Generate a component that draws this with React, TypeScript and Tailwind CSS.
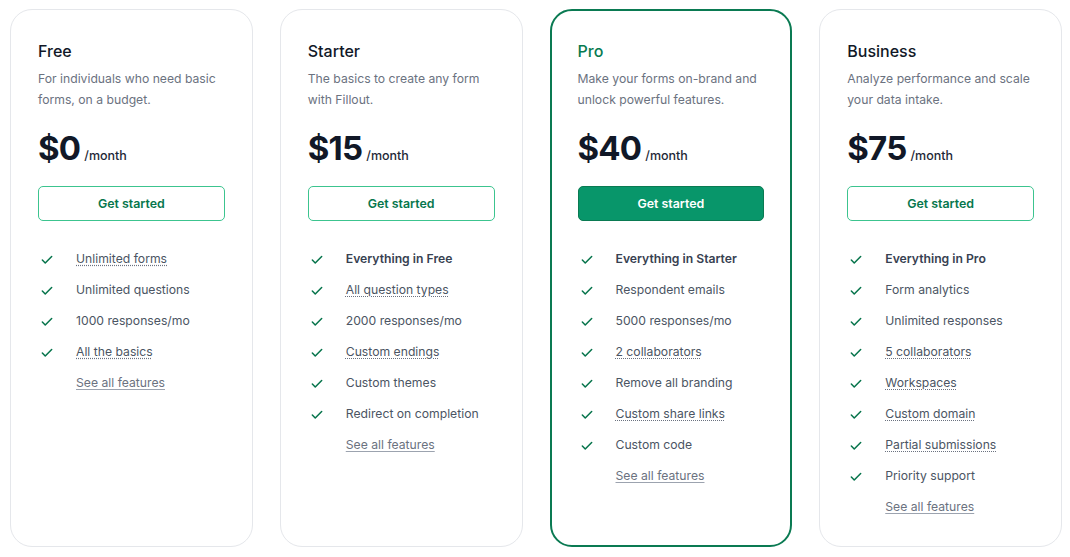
import React from 'react';
import { Check } from 'lucide-react';

type Feature = { text: string; bold?: boolean; dotted?: boolean };

type Plan = {
  name: string;
  description: string;
  price: string;
  highlight?: boolean;
  features: Feature[];
};

const plans: Plan[] = [
  {
    name: 'Free',
    description: 'For individuals who need basic forms, on a budget.',
    price: '$0',
    features: [
      { text: 'Unlimited forms', dotted: true },
      { text: 'Unlimited questions' },
      { text: '1000 responses/mo' },
      { text: 'All the basics', dotted: true },
    ],
  },
  {
    name: 'Starter',
    description: 'The basics to create any form with Fillout.',
    price: '$15',
    features: [
      { text: 'Everything in Free', bold: true },
      { text: 'All question types', dotted: true },
      { text: '2000 responses/mo' },
      { text: 'Custom endings', dotted: true },
      { text: 'Custom themes' },
      { text: 'Redirect on completion' },
    ],
  },
  {
    name: 'Pro',
    description: 'Make your forms on-brand and unlock powerful features.',
    price: '$40',
    highlight: true,
    features: [
      { text: 'Everything in Starter', bold: true },
      { text: 'Respondent emails' },
      { text: '5000 responses/mo' },
      { text: '2 collaborators', dotted: true },
      { text: 'Remove all branding' },
      { text: 'Custom share links', dotted: true },
      { text: 'Custom code' },
    ],
  },
  {
    name: 'Business',
    description: 'Analyze performance and scale your data intake.',
    price: '$75',
    features: [
      { text: 'Everything in Pro', bold: true },
      { text: 'Form analytics' },
      { text: 'Unlimited responses' },
      { text: '5 collaborators', dotted: true },
      { text: 'Workspaces', dotted: true },
      { text: 'Custom domain', dotted: true },
      { text: 'Partial submissions', dotted: true },
      { text: 'Priority support' },
    ],
  },
];

const PlanCard: React.FC<{ plan: Plan }> = ({ plan }) => {
  return (
    <div
      className={
        plan.highlight
          ? 'h-[538px] rounded-[22px] border-2 border-[#0a7a52] px-[26px] pt-[28px]'
          : 'h-[538px] rounded-[22px] border border-[#e5e7eb] px-[27px] pt-[29px]'
      }
    >
      <h3
        className={
          plan.highlight
            ? 'text-[16px] leading-6 font-medium text-[#087a50]'
            : 'text-[16px] leading-6 font-medium text-[#111827]'
        }
      >
        {plan.name}
      </h3>
      <p className="mt-[5px] text-[12.2px] leading-[21px] text-[#6b7280]">{plan.description}</p>

      <div className="mt-[18px] flex items-baseline gap-[4px]">
        <span className="text-[33px] leading-[40px] font-bold tracking-[-0.8px] text-[#111827]">
          {plan.price}
        </span>
        <span className="text-[12.5px] font-medium text-[#1f2937]">/month</span>
      </div>

      <button
        className={
          plan.highlight
            ? 'mt-[18px] h-[35px] w-full rounded-[5px] border border-[#0a7a52] bg-[#08966a] pt-[1px] text-[12.4px] font-semibold text-white'
            : 'mt-[18px] h-[35px] w-full rounded-[5px] border border-[#3cc48f] bg-white pt-[1px] text-[12.4px] font-semibold text-[#07774d]'
        }
      >
        Get started
      </button>

      <ul className="mt-[23px] text-[12.2px]">
        {plan.features.map((f, idx) => (
          <li key={idx} className="flex h-[31px] items-center">
            <span className="flex w-[38px] pl-[2px]">
              <Check size={14} strokeWidth={2.6} color="#06744b" />
            </span>
            <span
              className={
                (f.bold ? 'font-semibold text-[#374151] ' : 'text-[#4b5563] ') +
                (f.dotted ? 'underline decoration-dotted decoration-[#6b7280] underline-offset-[2px]' : '')
              }
            >
              {f.text}
            </span>
          </li>
        ))}
        <li className="flex h-[31px] items-center pl-[38px]">
          <a className="text-[#6b7280] underline decoration-[#9ca3af] underline-offset-[2px]">See all features</a>
        </li>
      </ul>
    </div>
  );
};

export default function App() {
  return (
    <div
      className="h-[557px] w-[1070px] bg-white pt-[9px] pr-[8px] pl-[10px]"
      style={{ fontFamily: 'Inter, "Noto Sans", sans-serif' }}
    >
      <div className="grid grid-cols-4 gap-[27px]">
        {plans.map((p) => (
          <PlanCard key={p.name} plan={p} />
        ))}
      </div>
    </div>
  );
}
